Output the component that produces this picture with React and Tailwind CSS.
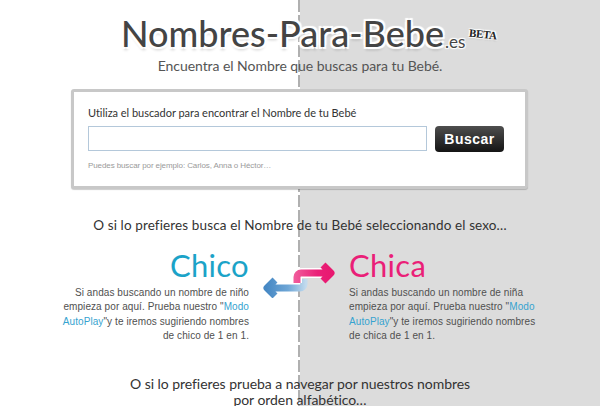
const titleFont = "font-['Lato','Noto_Sans',sans-serif]";

function Arrows() {
  return (
    <svg width="74" height="36" viewBox="0 0 74 36" className="shrink-0">
      <defs>
        <linearGradient id="pink" gradientUnits="userSpaceOnUse" x1="31" y1="0" x2="70" y2="0">
          <stop offset="0" stopColor="#f15c9c" />
          <stop offset="0.6" stopColor="#ea2078" />
          <stop offset="1" stopColor="#e8186f" />
        </linearGradient>
        <linearGradient id="blue" gradientUnits="userSpaceOnUse" x1="3" y1="0" x2="43" y2="0">
          <stop offset="0" stopColor="#4688c4" />
          <stop offset="0.55" stopColor="#6ea6d6" />
          <stop offset="1" stopColor="#c3dbee" />
        </linearGradient>
      </defs>
      <path d="M41 17v5a4 4 0 0 1-4 4H6M12 18l-8 8 8 8" fill="none" stroke="url(#blue)" strokeWidth="7" strokeLinejoin="round" />
      <path d="M34 21v-6a4 4 0 0 1 4-4H67" fill="none" stroke="#fff" strokeWidth="10" />
      <path d="M34 21v-6a4 4 0 0 1 4-4H66M60 3l8 8-8 8" fill="none" stroke="url(#pink)" strokeWidth="7" strokeLinejoin="round" />
    </svg>
  );
}

export default function App() {
  return (
    <div className="relative h-[406px] w-[600px] overflow-hidden bg-[linear-gradient(to_right,#ffffff_50%,#dcdcdc_50%)]">
      <div className="absolute inset-y-0 left-[298px] w-[2px] bg-[repeating-linear-gradient(to_bottom,#b0b0b0_0_12px,transparent_12px_15px)]" />

      <div className="relative flex flex-col items-center">
        <header className={`mt-[11px] flex h-[44px] w-[600px] items-end pl-[121px] text-[#444444] ${titleFont}`}>
          <h1 className="text-[36px] leading-[44px] font-medium [text-shadow:0_0_2px_#fff,2px_2px_1px_#fff,-2px_-2px_1px_#fff,2px_-2px_1px_#fff,-2px_2px_1px_#fff,0_3px_3px_rgba(0,0,0,0.2)]">
            Nombres-Para-Bebe
          </h1>
          <span className="mb-[3px] ml-[1px] text-[17px] leading-5 [text-shadow:0_0_2px_#fff,1px_1px_1px_#fff,-1px_-1px_1px_#fff,1px_-1px_1px_#fff,-1px_1px_1px_#fff]">.es</span>
          <span className="mb-[15px] ml-[4px] rotate-6 font-['Liberation_Serif',serif] text-[11px] leading-3 font-bold tracking-[-0.3px] text-[#222222] [text-shadow:1px_1px_1px_#fff,-1px_-1px_1px_#fff,1px_-1px_1px_#fff,-1px_1px_1px_#fff,0_1px_2px_rgba(0,0,0,0.3)]">BETA</span>
        </header>
        <p className={`mt-[1px] text-[14px] leading-5 tracking-[-0.05px] text-[#555555] ${titleFont}`}>
          Encuentra el Nombre que buscas para tu Bebé.
        </p>

        <section className="mt-[13px] ml-[-1px] h-[100px] w-[457px] rounded-[3px] border-[3px] border-[#c8c8c8] bg-white pt-[13px] pr-[21px] pl-[14px] shadow-[0_1px_1px_rgba(0,0,0,0.2)]">
          <p className={`text-[11px] leading-4 tracking-[-0.03px] text-[#333333] ${titleFont}`}>
            Utiliza el buscador para encontrar el Nombre de tu Bebé
          </p>
          <div className="mt-[5px] flex items-start justify-between">
            <input type="text" className="h-[25px] w-[339px] border border-[#b4c8da] bg-white" />
            <button className="h-[26px] w-[69px] rounded-[4px] bg-[linear-gradient(to_bottom,#4e4e4e,#141414)] font-['Liberation_Sans',sans-serif] text-[14px] font-bold tracking-[0.5px] text-white">
              Buscar
            </button>
          </div>
          <p className="mt-[8px] font-['Liberation_Sans',sans-serif] text-[8px] leading-3 tracking-[-0.1px] text-[#9a9a9a]">
            Puedes buscar por ejemplo: Carlos, Anna o Héctor…
          </p>
        </section>

        <p className={`mt-[26px] text-[13.5px] leading-5 tracking-[0.12px] text-[#333333] ${titleFont}`}>
          O si lo prefieres busca el Nombre de tu Bebé seleccionando el sexo…
        </p>

        <div className="mt-[10px] flex w-[600px] items-start">
          <div className="ml-[50px] w-[199px] text-right font-['Liberation_Sans',sans-serif] text-[10px] tracking-[0.08px] whitespace-nowrap text-[#505050]">
            <h2 className={`h-[41px] text-[31px] leading-[40px] tracking-[0.3px] text-[#1ba3c8] ${titleFont}`}>Chico</h2>
            <p className="leading-[14.3px]">
              Si andas buscando un nombre de niño
              <br />
              empieza por aquí. Prueba nuestro "<a className="text-[#36a3d0]">Modo</a>
              <br />
              <a className="text-[#36a3d0]">AutoPlay</a>"y te iremos sugiriendo nombres
              <br />
              de chico de 1 en 1.
            </p>
          </div>
          <div className="mt-[17px] ml-[14px] w-[86px]">
            <Arrows />
          </div>
          <div className="w-[199px] font-['Liberation_Sans',sans-serif] text-[10px] tracking-[0.08px] whitespace-nowrap text-[#505050]">
            <h2 className={`h-[41px] text-[31px] leading-[40px] tracking-[0.3px] text-[#ea1f78] ${titleFont}`}>Chica</h2>
            <p className="leading-[14.3px]">
              Si andas buscando un nombre de niña
              <br />
              empieza por aquí. Prueba nuestro "<a className="text-[#36a3d0]">Modo</a>
              <br />
              <a className="text-[#36a3d0]">AutoPlay</a>"y te iremos sugiriendo nombres
              <br />
              de chica de 1 en 1.
            </p>
          </div>
        </div>

        <p className={`mt-[33px] text-center text-[14px] leading-[16px] tracking-[-0.05px] text-[#333333] ${titleFont}`}>
          O si lo prefieres prueba a navegar por nuestros nombres
          <br />
          por orden alfabético…
        </p>
      </div>
    </div>
  );
}
